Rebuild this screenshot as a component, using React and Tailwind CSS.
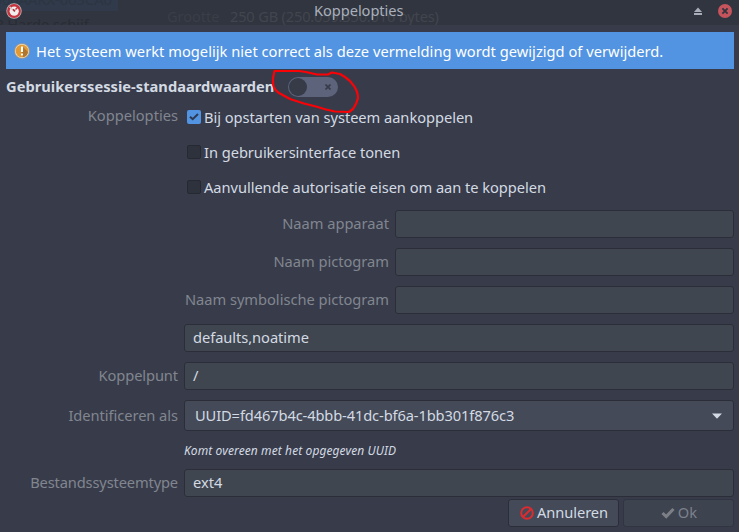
const labelClass = "w-[172px] shrink-0 whitespace-nowrap pb-[2px] text-right text-[#818690]";
const fieldClass =
  "flex h-7 min-w-0 items-center rounded-[3px] border border-[#2b2e39] bg-[#404650] pb-[2px] pl-2 whitespace-nowrap text-[#d3dae3]";

function TitleBar() {
  return (
    <header className="relative flex h-[25px] items-center overflow-hidden bg-[#31353f] text-[14.67px]">
      <div className="absolute left-0 top-0 h-[11px] w-[118px] overflow-hidden bg-[#303a4a]">
        <span className="absolute right-[6px] -top-[10px] leading-[18px] whitespace-nowrap text-[#2c3542]">WD2500AAKX-603CA0</span>
      </div>
      <span className="absolute -left-[3px] top-[14px] leading-[20px] whitespace-nowrap text-[#292c35]">? Harde schijf</span>
      <span className="absolute left-[167px] top-[6px] leading-[20px] tracking-[-0.1px] whitespace-nowrap text-[#3a3e47]">Grootte</span>
      <span className="absolute left-[230px] top-[6px] leading-[20px] tracking-[-0.2px] whitespace-nowrap text-[#41454e]">250 GB (250.059.350.016 bytes)</span>
      <svg className="absolute left-[6px] top-[3px]" width="16" height="16" viewBox="0 0 16 16">
        <circle cx="8" cy="8" r="7.700" fill="#b9b9bb" />
        <circle cx="8" cy="8" r="6.900" fill="#c8323d" />
        <circle cx="8.200" cy="8.200" r="4.600" fill="#f1eded" />
        <path d="M3.500 3.800 8.200 8.200" stroke="#d9d4d4" strokeWidth="1.400" />
        <path d="M7 6.200 9 8.400" stroke="#b22c36" strokeWidth="1.700" />
        <path d="m9.500 6.500 2.500-2.500" stroke="#c8323d" strokeWidth="1.500" />
      </svg>
      <h1 className="absolute left-[314px] top-0 leading-[20px] tracking-[-0.07px] whitespace-nowrap text-[#a9b0bc]">Koppelopties</h1>
      <svg className="absolute left-[694px] top-[7px]" width="8" height="8" viewBox="0 0 8 8" fill="#a8adb9">
        <path d="M4 .5 8 5H0zM0 6h8v2H0z" />
      </svg>
      <svg className="absolute left-[718px] top-[4px]" width="14" height="14" viewBox="0 0 14 14">
        <circle cx="7" cy="7" r="7" fill="#c6545c" />
        <path d="m4.400 4.400 5.200 5.200m0-5.200L4.400 9.600" stroke="#31353f" strokeWidth="1.800" />
      </svg>
    </header>
  );
}

function Warning() {
  return (
    <div className="mr-[5px] ml-[6px] mt-[7px] flex h-[37px] items-center bg-[#5294e2] pl-2 text-white">
      <svg width="16" height="16" viewBox="0 0 16 16" className="shrink-0">
        <circle cx="8" cy="8" r="7.800" fill="#a39a8c" />
        <circle cx="8" cy="8" r="7" fill="#f2dfbc" />
        <circle cx="8" cy="8" r="6.300" fill="#e39a35" />
        <path d="M9 4l5 5a6.300 6.300 0 0 1-4.500 5L7 12z" fill="#ae762f" />
        <path d="M7 3.500h2V9H7zM7 10.500h2v2H7z" fill="#fff" />
      </svg>
      <span className="ml-[6px] tracking-[0.02px] whitespace-nowrap">Het systeem werkt mogelijk niet correct als deze vermelding wordt gewijzigd of verwijderd.</span>
    </div>
  );
}

function SessionSwitch() {
  return (
    <div className="relative mt-2 flex h-5 items-center pl-[6px]">
      <span className="w-[282px] pb-[2px] tracking-[0.02px] whitespace-nowrap font-bold text-[#d3dae3]">Gebruikerssessie-standaardwaarden</span>
      <span className="flex h-5 w-[50px] items-center justify-between rounded-full bg-[#5c637b] pl-px pr-[7px]">
        <span className="h-[18px] w-[18px] rounded-full bg-[#363b47]" />
        <svg width="6" height="6" viewBox="0 0 6 6"><path d="m.5.5 5 5m0-5-5 5" stroke="#383c4a" strokeWidth="1.700" /></svg>
      </span>
      <svg className="absolute left-[265px] -top-[12px]" width="100" height="55" viewBox="0 0 100 55" fill="none">
        <path d="M9.500 6H34l7 1 11 2.500h11l4-2 8 1.500 5 3q6 4 9 9 4 6 4 12-1 5-5 11l-4 3-14-.5-9-2-10-3-12-3-14-4.500-11-6q-6-4-6-10V13z" stroke="#fb0207" strokeWidth="2.200" strokeLinejoin="round" />
      </svg>
    </div>
  );
}

function Check({ checked, children }) {
  return (
    <div className="flex h-[35px] items-center">
      <span className={checked
        ? "flex h-[14px] w-[14px] items-center justify-center rounded-[2px] bg-[#5294e2]"
        : "h-[14px] w-[14px] rounded-[2px] border border-[#262932] bg-[#2e323d]"}>
        {checked && <svg width="10" height="8" viewBox="0 0 10 8"><path d="m1 3.700 2.700 2.500L9 1" fill="none" stroke="#2d3a50" strokeWidth="2" /></svg>}
      </span>
      <span className="ml-[3px] tracking-[-0.045px] whitespace-nowrap">{children}</span>
    </div>
  );
}

function NameField({ label }) {
  return (
    <div className="flex h-7 items-center">
      <span className="mr-[6px] w-[205px] shrink-0 pb-[2px] text-right tracking-[-0.02px] whitespace-nowrap text-[#818690]">{label}</span>
      <div className="h-7 flex-1 rounded-[3px] border border-[#2b2e39] bg-[#404650]" />
    </div>
  );
}

export default function App() {
  return (
    <main className="h-[532px] w-[739px] overflow-hidden bg-[#383c4a] font-['Noto_Sans',sans-serif] text-[14.67px] leading-[20px] text-[#d3dae3]">
      <TitleBar />
      <Warning />
      <SessionSwitch />
      <section className="flex pl-[6px] pr-[5px]">
        <span className={labelClass + " mt-[8px]"}>Koppelopties</span>
        <div className="ml-[6px] flex-1">
          <div className="ml-[3px] mt-[2px]">
            <Check checked>Bij opstarten van systeem aankoppelen</Check>
            <Check>In gebruikersinterface tonen</Check>
            <Check>Aanvullende autorisatie eisen om aan te koppelen</Check>
          </div>
          <div className="mt-[6px] flex flex-col gap-[10px]">
            <NameField label="Naam apparaat" />
            <NameField label="Naam pictogram" />
            <NameField label="Naam symbolische pictogram" />
            <div className={fieldClass + " tracking-[-0.06px]"}>defaults,noatime</div>
          </div>
        </div>
      </section>
      <section className="mt-[10px] flex flex-col pl-[6px] pr-[5px]">
        <div className="flex items-center gap-[6px]">
          <span className={labelClass + " tracking-[-0.1px]"}>Koppelpunt</span>
          <div className={fieldClass + " flex-1"}>/</div>
        </div>
        <div className="mt-[10px] flex items-center gap-[6px]">
          <span className={labelClass + " tracking-[-0.05px]"}>Identificeren als</span>
          <div className="flex h-[31px] min-w-0 flex-1 items-center justify-between rounded-[3px] border border-[#2b2e39] bg-[#444a58] pl-[10px] pr-[11px]">
            <span className="pb-[2px] tracking-[-0.12px]">UUID=fd467b4c-4bbb-41dc-bf6a-1bb301f876c3</span>
            <svg width="10" height="6" viewBox="0 0 10 6"><path d="M0 .5h10L5 5.700z" fill="#d3dae3" /></svg>
          </div>
        </div>
        <div className="ml-[178px] mt-[10px] h-[20px] text-[12px] italic tracking-[0.1px]">Komt overeen met het opgegeven UUID</div>
        <div className="mt-[8px] flex items-center gap-[6px]">
          <span className={labelClass + " tracking-[-0.14px]"}>Bestandssysteemtype</span>
          <div className={fieldClass + " flex-1"}>ext4</div>
        </div>
      </section>
      <footer className="mt-[2px] flex justify-end gap-1 pr-[5px]">
        <button className="flex h-7 w-[111px] items-center justify-center gap-[3px] rounded-[3px] border border-[#2b2e39] bg-[#444a58] pl-px">
          <svg width="14" height="14" viewBox="0 0 14 14" fill="none" stroke="#dc2c30" strokeWidth="2"><circle cx="7" cy="7" r="5.800" /><path d="m3.200 10.800 7.600-7.600" /></svg>
          <span className="pb-[2px] tracking-[-0.06px]">Annuleren</span>
        </button>
        <button className="flex h-7 w-[111px] items-center justify-center gap-[3px] rounded-[3px] border border-[#313541] bg-[#3e4350] pl-px text-[#7c818c]">
          <svg width="14" height="12" viewBox="0 0 14 12"><path d="m1.500 6 3.700 3.600L12.500 2" fill="none" stroke="#7c8086" strokeWidth="3" /></svg>
          <span className="pb-[2px]">Ok</span>
        </button>
      </footer>
    </main>
  );
}
